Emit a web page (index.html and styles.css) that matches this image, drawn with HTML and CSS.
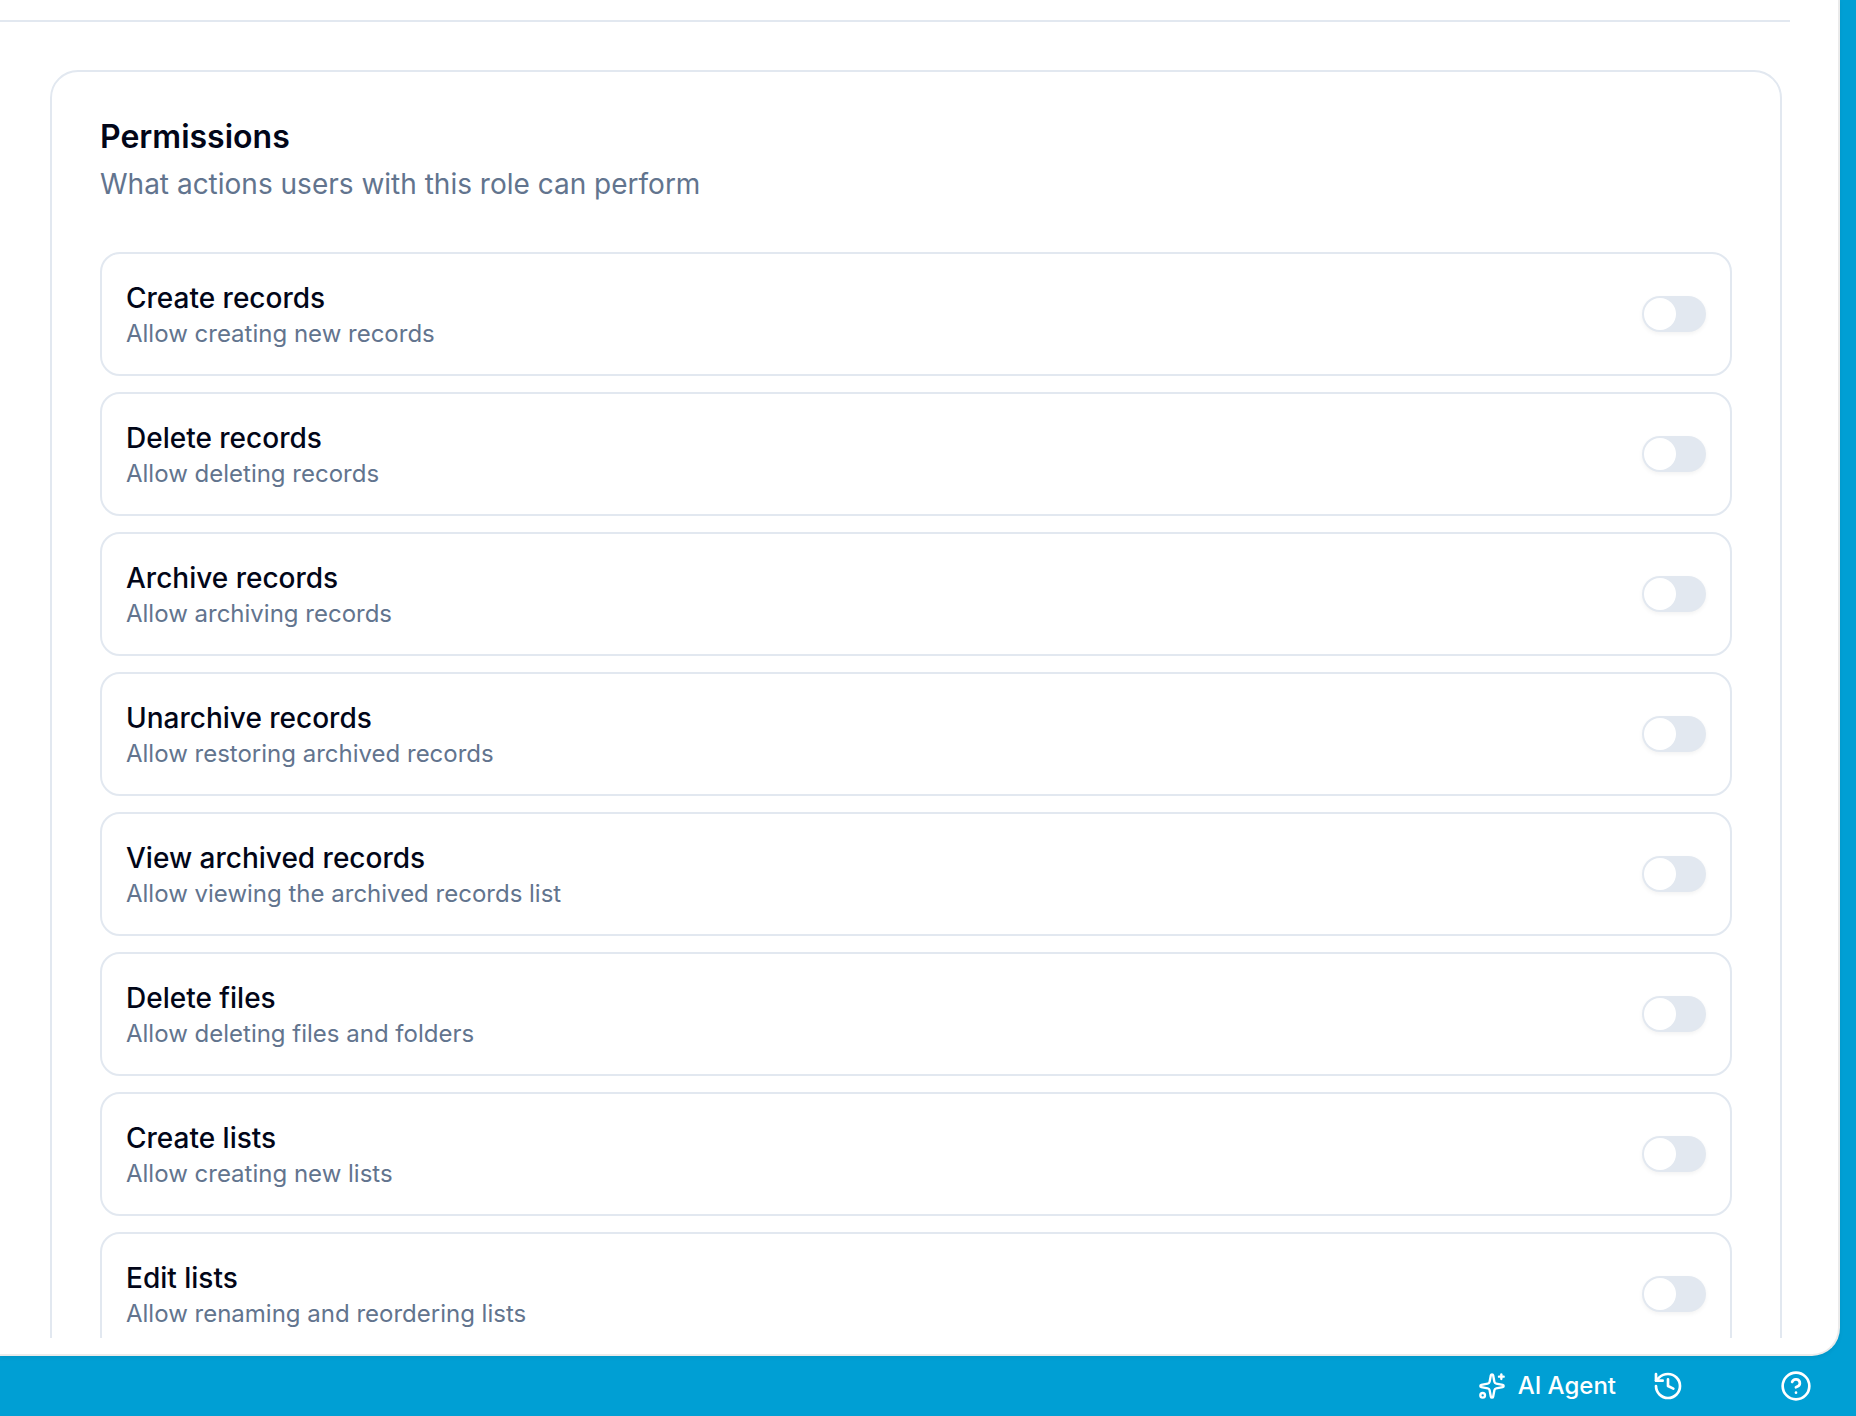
FILE: index.html
```html
<!DOCTYPE html>
<html lang="en">

<head>
  <meta charset="UTF-8">
  <meta name="viewport" content="width=device-width, initial-scale=1.0">
  <title>Role Permissions</title>
  <link rel="stylesheet" href="styles.css">
</head>

<body>

  <!-- main panel -->
  <main class="panel">
    <div class="panel-scroll">
      <div class="divider"></div>

      <!-- permissions card -->
      <section class="card">
        <h2 class="card-title">Permissions</h2>
        <p class="card-subtitle">What actions users with this role can perform</p>

        <div class="permission-list">
          <div class="permission">
            <div class="permission-text">
              <div class="permission-name">Create records</div>
              <div class="permission-desc">Allow creating new records</div>
            </div>
            <button class="switch" type="button" role="switch" aria-checked="false"><span class="switch-thumb"></span></button>
          </div>

          <div class="permission">
            <div class="permission-text">
              <div class="permission-name">Delete records</div>
              <div class="permission-desc">Allow deleting records</div>
            </div>
            <button class="switch" type="button" role="switch" aria-checked="false"><span class="switch-thumb"></span></button>
          </div>

          <div class="permission">
            <div class="permission-text">
              <div class="permission-name">Archive records</div>
              <div class="permission-desc">Allow archiving records</div>
            </div>
            <button class="switch" type="button" role="switch" aria-checked="false"><span class="switch-thumb"></span></button>
          </div>

          <div class="permission">
            <div class="permission-text">
              <div class="permission-name">Unarchive records</div>
              <div class="permission-desc">Allow restoring archived records</div>
            </div>
            <button class="switch" type="button" role="switch" aria-checked="false"><span class="switch-thumb"></span></button>
          </div>

          <div class="permission">
            <div class="permission-text">
              <div class="permission-name">View archived records</div>
              <div class="permission-desc">Allow viewing the archived records list</div>
            </div>
            <button class="switch" type="button" role="switch" aria-checked="false"><span class="switch-thumb"></span></button>
          </div>

          <div class="permission">
            <div class="permission-text">
              <div class="permission-name">Delete files</div>
              <div class="permission-desc">Allow deleting files and folders</div>
            </div>
            <button class="switch" type="button" role="switch" aria-checked="false"><span class="switch-thumb"></span></button>
          </div>

          <div class="permission">
            <div class="permission-text">
              <div class="permission-name">Create lists</div>
              <div class="permission-desc">Allow creating new lists</div>
            </div>
            <button class="switch" type="button" role="switch" aria-checked="false"><span class="switch-thumb"></span></button>
          </div>

          <div class="permission">
            <div class="permission-text">
              <div class="permission-name">Edit lists</div>
              <div class="permission-desc">Allow renaming and reordering lists</div>
            </div>
            <button class="switch" type="button" role="switch" aria-checked="false"><span class="switch-thumb"></span></button>
          </div>
        </div>
      </section>
    </div>
  </main>

  <!-- bottom bar -->
  <footer class="bottom-bar">
    <a href="#" class="agent-link">
      <svg class="icon icon-small" viewBox="0 0 24 24">
        <path d="M11.017 2.814a1 1 0 0 1 1.966 0l1.051 5.558a2 2 0 0 0 1.594 1.594l5.558 1.051a1 1 0 0 1 0 1.966l-5.558 1.051a2 2 0 0 0-1.594 1.594l-1.051 5.558a1 1 0 0 1-1.966 0l-1.051-5.558a2 2 0 0 0-1.594-1.594l-5.558-1.051a1 1 0 0 1 0-1.966l5.558-1.051a2 2 0 0 0 1.594-1.594z" />
        <path d="M20 2v4" />
        <path d="M22 4h-4" />
        <circle cx="4" cy="20" r="2" />
      </svg>
      AI Agent
    </a>
    <a href="#" class="history-link" aria-label="History">
      <svg class="icon" viewBox="0 0 24 24">
        <path d="M3 12a9 9 0 1 0 9-9 9.75 9.75 0 0 0-6.74 2.74L3 8" />
        <path d="M3 3v5h5" />
        <path d="M12 7v5l4 2" />
      </svg>
    </a>
    <a href="#" class="help-link" aria-label="Help">
      <svg class="icon" viewBox="0 0 24 24">
        <circle cx="12" cy="12" r="10" />
        <path d="M9.09 9a3 3 0 0 1 5.83 1c0 2-3 3-3 3" />
        <path d="M12 17h.01" />
      </svg>
    </a>
  </footer>

</body>

</html>
```
FILE: styles.css
```css
* {
  box-sizing: border-box;
}

body {
  display: flex;
  flex-direction: column;
  height: 100vh;
  margin: 0;
  overflow: hidden;
  background-color: #009fd4;
  color: #020618;
  font-family: Inter, sans-serif;
}

/* main panel */
.panel {
  flex: 1;
  min-height: 0;
  margin-right: 16px;
  padding-bottom: 16px;
  background-color: #fff;
  border-right: 2px solid #ebebeb;
  border-bottom: 2px solid #ebebeb;
  border-bottom-right-radius: 28px;
  box-shadow: 0 2px 4px rgba(0, 0, 0, 0.06);
}

.panel-scroll {
  height: 100%;
  padding: 20px 48px 0 0;
  overflow: hidden;
}

.divider {
  height: 2px;
  background-color: #e2e8f0;
}

/* permissions card */
.card {
  margin: 48px 8px 0 50px;
  padding: 48px;
  border: 2px solid #e2e8f0;
  border-radius: 28px;
}

.card-title {
  margin: 0;
  font-size: 32px;
  font-weight: 600;
  line-height: 34px;
}

.card-subtitle {
  margin: 10px 0 48px;
  color: #62748e;
  font-size: 28px;
  line-height: 40px;
}

.permission-list {
  display: flex;
  flex-direction: column;
  gap: 16px;
}

.permission {
  display: flex;
  align-items: center;
  justify-content: space-between;
  padding: 24px;
  border: 2px solid #e2e8f0;
  border-radius: 20px;
}

.permission-name {
  font-size: 28px;
  font-weight: 500;
  line-height: 40px;
}

.permission-desc {
  color: #62748e;
  font-size: 24px;
  line-height: 32px;
}

/* toggle switch */
.switch {
  display: flex;
  align-items: center;
  width: 64px;
  height: 36px;
  padding: 2px;
  border: none;
  border-radius: 18px;
  background-color: #e2e8f0;
  box-shadow: 0 2px 4px rgba(0, 0, 0, 0.05);
  cursor: pointer;
}

.switch-thumb {
  width: 32px;
  height: 32px;
  border-radius: 50%;
  background-color: #fff;
}

/* bottom bar */
.bottom-bar {
  display: flex;
  align-items: center;
  justify-content: flex-end;
  height: 60px;
  padding-right: 44px;
}

.bottom-bar a {
  display: flex;
  align-items: center;
  color: #fff;
  text-decoration: none;
}

.agent-link {
  gap: 12px;
  font-size: 24px;
  font-weight: 500;
  line-height: 32px;
}

.history-link {
  margin-left: 36px;
}

.help-link {
  margin-left: 96px;
}

.icon {
  width: 32px;
  height: 32px;
  fill: none;
  stroke: currentColor;
  stroke-width: 2;
  stroke-linecap: round;
  stroke-linejoin: round;
}

.icon-small {
  width: 28px;
  height: 28px;
}
```
